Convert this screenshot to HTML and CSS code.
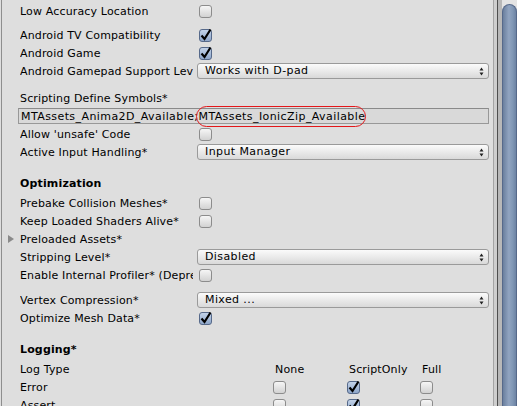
FILE: index.html
```html
<!DOCTYPE html>
<html>
<head>
<meta charset="utf-8">
<link rel="stylesheet" href="styles.css">
</head>
<body>
<div class="window">
  <div class="inspector">
    <div class="row first"><div class="label">Low Accuracy Location</div><div class="control"><span class="cb"></span></div></div>
    <div class="sp6"></div>
    <div class="row"><div class="label">Android TV Compatibility</div><div class="control"><span class="cb on"><svg class="tick" viewBox="0 0 14 14" width="14" height="14"><path d="M2.5 7.5 L5.5 11 L11.5 1.5" fill="none" stroke="#000" stroke-width="2.2"/></svg></span></div></div>
    <div class="row"><div class="label">Android Game</div><div class="control"><span class="cb on"><svg class="tick" viewBox="0 0 14 14" width="14" height="14"><path d="M2.5 7.5 L5.5 11 L11.5 1.5" fill="none" stroke="#000" stroke-width="2.2"/></svg></span></div></div>
    <div class="row"><div class="label">Android Gamepad Support Level</div><div class="control"><div class="dd"><span>Works with D-pad</span><svg class="arr" viewBox="0 0 5 9" width="5" height="9"><path d="M0.5 3.5 L2.5 0.5 L4.5 3.5 Z M0.5 5.5 L2.5 8.5 L4.5 5.5 Z" fill="#222"/></svg></div></div></div>
    <div class="sp9"></div>
    <div class="row"><div class="label wide">Scripting Define Symbols*</div></div>
    <div class="row">
      <div class="fieldwrap">
        <div class="field">MTAssets_Anima2D_Available;MTAssets_IonicZip_Available</div>
        <div class="ring"></div>
      </div>
    </div>
    <div class="row"><div class="label">Allow 'unsafe' Code</div><div class="control"><span class="cb"></span></div></div>
    <div class="row"><div class="label">Active Input Handling*</div><div class="control"><div class="dd"><span>Input Manager</span><svg class="arr" viewBox="0 0 5 9" width="5" height="9"><path d="M0.5 3.5 L2.5 0.5 L4.5 3.5 Z M0.5 5.5 L2.5 8.5 L4.5 5.5 Z" fill="#222"/></svg></div></div></div>
    <div class="sp13"></div>
    <div class="row head"><div class="label wide bold">Optimization</div></div>
    <div class="row"><div class="label">Prebake Collision Meshes*</div><div class="control"><span class="cb"></span></div></div>
    <div class="row"><div class="label">Keep Loaded Shaders Alive*</div><div class="control"><span class="cb"></span></div></div>
    <div class="row"><div class="label wide fold"><span class="tri"></span>Preloaded Assets*</div></div>
    <div class="row"><div class="label">Stripping Level*</div><div class="control"><div class="dd"><span>Disabled</span><svg class="arr" viewBox="0 0 5 9" width="5" height="9"><path d="M0.5 3.5 L2.5 0.5 L4.5 3.5 Z M0.5 5.5 L2.5 8.5 L4.5 5.5 Z" fill="#222"/></svg></div></div></div>
    <div class="row"><div class="label">Enable Internal Profiler* (Deprecated)</div><div class="control"><span class="cb"></span></div></div>
    <div class="sp7"></div>
    <div class="row"><div class="label">Vertex Compression*</div><div class="control"><div class="dd"><span>Mixed ...</span><svg class="arr" viewBox="0 0 5 9" width="5" height="9"><path d="M0.5 3.5 L2.5 0.5 L4.5 3.5 Z M0.5 5.5 L2.5 8.5 L4.5 5.5 Z" fill="#222"/></svg></div></div></div>
    <div class="row"><div class="label">Optimize Mesh Data*</div><div class="control"><span class="cb on"><svg class="tick" viewBox="0 0 14 14" width="14" height="14"><path d="M2.5 7.5 L5.5 11 L11.5 1.5" fill="none" stroke="#000" stroke-width="2.2"/></svg></span></div></div>
    <div class="sp13"></div>
    <div class="row head"><div class="label wide bold">Logging*</div></div>
    <div class="row"><div class="loglabel">Log Type</div><div class="col">None</div><div class="col">ScriptOnly</div><div class="col full">Full</div></div>
    <div class="row"><div class="loglabel">Error</div><div class="col"><span class="cb"></span></div><div class="col"><span class="cb on"><svg class="tick" viewBox="0 0 14 14" width="14" height="14"><path d="M2.5 7.5 L5.5 11 L11.5 1.5" fill="none" stroke="#000" stroke-width="2.2"/></svg></span></div><div class="col full"><span class="cb"></span></div></div>
    <div class="row"><div class="loglabel">Assert</div><div class="col"><span class="cb"></span></div><div class="col"><span class="cb on"><svg class="tick" viewBox="0 0 14 14" width="14" height="14"><path d="M2.5 7.5 L5.5 11 L11.5 1.5" fill="none" stroke="#000" stroke-width="2.2"/></svg></span></div><div class="col full"><span class="cb"></span></div></div>
  </div>
  <div class="sepA"></div>
  <div class="gapL"></div>
  <div class="sepB"></div>
  <div class="track"><div class="lane"><div class="thumb"></div></div></div>
</div>
</body>
</html>
```
FILE: styles.css
```css
html, body {
  margin: 0;
  padding: 0;
  background: #dedede;
}
body {
  font-family: "DejaVu Sans", "Liberation Sans", sans-serif;
  font-size: 11px;
  letter-spacing: 0.15px;
  color: #000;
}
.window {
  display: flex;
  width: 517px;
  height: 406px;
  overflow: hidden;
}
.inspector {
  width: 473px;
  flex: none;
  margin-left: 1px;
  border-left: 1px solid #8e8e8e;
  padding-left: 18px;
  padding-top: 3px;
  background: #dedede;
}
.row {
  display: flex;
  align-items: center;
  height: 16px;
  margin-bottom: 2px;
}
.row.head {
  margin-bottom: 4px;
}
.sp6 { height: 6px; }
.sp7 { height: 7px; }
.sp9 { height: 9px; }
.sp13 { height: 13px; }
.label {
  width: 173px;
  margin-right: 4px;
  flex: none;
  overflow: hidden;
  white-space: nowrap;
  height: 15px;
  padding-top: 1px;
  line-height: 15px;
}
.label.wide {
  width: auto;
  overflow: visible;
}
.bold {
  font-weight: bold;
}
.fold {
  position: relative;
}
.tri {
  position: absolute;
  left: -12px;
  top: 4px;
  width: 0;
  height: 0;
  border-top: 4.5px solid transparent;
  border-bottom: 4.5px solid transparent;
  border-left: 6px solid #8a8a8a;
}
.control {
  flex: 1;
  margin-right: 4px;
  display: flex;
  align-items: center;
}
.cb {
  position: relative;
  display: inline-block;
  width: 11px;
  height: 11px;
  margin-left: 2px;
  border: 1px solid #8c8c8c;
  border-radius: 3px;
  background: linear-gradient(#f6f6f6, #d2d2d2);
  box-sizing: content-box;
}
.cb.on {
  border-color: #56698a;
  background: linear-gradient(#c2d2e8, #8ea6c9);
}
.tick {
  position: absolute;
  left: -1px;
  top: -2px;
}
.dd {
  flex: 1;
  height: 14px;
  border: 1px solid #9a9a9a;
  border-radius: 3px;
  background: linear-gradient(#fbfbfb, #d9d9d9);
  display: flex;
  align-items: center;
  justify-content: space-between;
  padding: 0 4px 0 7px;
  line-height: 14px;
  letter-spacing: 0.4px;
}
.arr {
  display: block;
}
.fieldwrap {
  position: relative;
  flex: 1;
  margin-left: -2px;
  margin-right: 4px;
}
.field {
  height: 14px;
  border: 1px solid #989898;
  border-top-color: #8a8a8a;
  background: #d9d9d9;
  padding-left: 2px;
  overflow: hidden;
  white-space: nowrap;
  line-height: 15px;
  letter-spacing: 0.42px;
}
.ring {
  position: absolute;
  left: 178px;
  top: -2px;
  width: 168px;
  height: 19px;
  border: 1px solid #e3171a;
  border-radius: 11px;
}
.loglabel {
  width: 253px;
  flex: none;
  line-height: 15px;
  padding-top: 1px;
}
.col {
  width: 74px;
  flex: none;
  display: flex;
  align-items: center;
  padding-left: 2px;
  box-sizing: border-box;
  line-height: 15px;
  padding-top: 1px;
}
.col .cb {
  margin-left: -2px;
}
.col.full {
  padding-left: 1px;
}
.sepA {
  width: 1px;
  flex: none;
  background: #a4a4a4;
}
.gapL {
  width: 3px;
  flex: none;
  background: #cecece;
}
.sepB {
  width: 1px;
  flex: none;
  background: #4e4e4e;
}
.track {
  flex: 1;
  background: #b8b8b8;
  padding-left: 4px;
  display: flex;
}
.lane {
  flex: 1;
  background: #e4e4e4;
  padding-top: 4px;
  display: flex;
}
.thumb {
  flex: 1;
  border-radius: 8px 8px 0 0;
  border: 1px solid #56698a;
  border-bottom: none;
  background: linear-gradient(90deg, #6a7f9e, #91a4c0 45%, #8097b5 75%, #6d83a3);
}
```
